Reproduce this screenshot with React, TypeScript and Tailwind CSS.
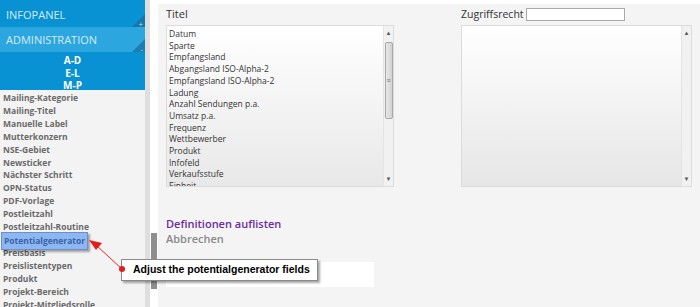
import React from 'react';

const sideItems = [
  'Mailing-Kategorie',
  'Mailing-Titel',
  'Manuelle Label',
  'Mutterkonzern',
  'NSE-Gebiet',
  'Newsticker',
  'Nächster Schritt',
  'OPN-Status',
  'PDF-Vorlage',
  'Postleitzahl',
  'Postleitzahl-Routine',
  'Potentialgenerator',
  'Preisbasis',
  'Preislistentypen',
  'Produkt',
  'Projekt-Bereich',
  'Projekt-Mitgliedsrolle',
];

const titelItems = [
  'Datum',
  'Sparte',
  'Empfangsland',
  'Abgangsland ISO-Alpha-2',
  'Empfangsland ISO-Alpha-2',
  'Ladung',
  'Anzahl Sendungen p.a.',
  'Umsatz p.a.',
  'Frequenz',
  'Wettbewerber',
  'Produkt',
  'Infofeld',
  'Verkaufsstufe',
  'Einheit',
];

const Corner: React.FC<{ sign: string }> = ({ sign }) => (
  <div className="absolute right-0 bottom-0 w-[13px] h-[13px]">
    <svg width="13" height="13" viewBox="0 0 13 13">
      <polygon points="13,0 13,13 0,13" fill="#1a6f9e" fillOpacity="0.75" />
    </svg>
    <span className="absolute right-[2px] bottom-[-1px] text-[8px] leading-none text-[#b9dcf0]">{sign}</span>
  </div>
);

const Scrollbar: React.FC<{ thumb?: boolean }> = ({ thumb }) => (
  <div className="w-[10px] flex flex-col items-center bg-[#f1f1f1] border-l border-[#e4e4e4]">
    <span className="text-[6px] leading-none mt-[4px] text-[#555]">▲</span>
    {thumb ? (
      <div className="mt-[6px] w-[8px] h-[77px] rounded-[2px] border border-[#a8a8a8] bg-gradient-to-r from-[#e8e8e8] to-[#d2d2d2] flex items-center justify-center">
        <span className="text-[7px] leading-none text-[#777]">≡</span>
      </div>
    ) : null}
    <div className="flex-1" />
    <span className="text-[6px] leading-none mb-[4px] text-[#555]">▼</span>
  </div>
);

const App: React.FC = () => {
  return (
    <div className="relative w-[700px] h-[307px] overflow-hidden bg-white flex font-['Open_Sans',sans-serif]">
      {/* Sidebar */}
      <div className="w-[145px] flex flex-col bg-[#f3f3f3]">
        <div className="bg-[#0891d3]">
          <div className="relative h-[27px] flex items-center pl-[6px] pt-[3px] text-[11px] text-[#d6ecf8]">
            INFOPANEL
            <Corner sign="+" />
          </div>
          <div className="relative h-[25px] flex items-center pl-[6px] pt-[1px] bg-[#2ba6de] text-[11px] text-[#d6ecf8]">
            ADMINISTRATION
            <Corner sign="-" />
          </div>
          <div className="h-[38px] flex flex-col items-center pt-[2px] text-[10px] font-bold text-white leading-[12.6px]">
            <span>A-D</span>
            <span>E-L</span>
            <span>M-P</span>
          </div>
        </div>
        <div className="flex flex-col pl-[3px] pt-[2px] text-[8.5px] font-bold text-[#6a6a6a] leading-[12.9px]">
          {sideItems.map((item) => (
            <span key={item} className="whitespace-nowrap">{item}</span>
          ))}
        </div>
      </div>

      {/* Separator with page scrollbar */}
      <div className="w-[5px] bg-[#dedede]" />
      <div className="w-[8px] bg-white flex flex-col">
        <div className="h-[233px]" />
        <div className="ml-[1px] w-[6px] h-[56px] bg-[#8e8e8e]" />
      </div>

      {/* Main */}
      <div className="flex-1 flex flex-col">
        <div className="h-[4px] bg-white" />
        <div className="flex-1 bg-[#f4f4f4] pl-[8px] text-[#333]">
          <div className="flex">
            <div className="w-[228px] flex flex-col">
              <div className="h-[21px] flex items-center text-[11px]">Titel</div>
              <div className="h-[162px] flex border border-[#dcdcdc] bg-gradient-to-b from-white to-[#e8e8e8]">
                <div className="flex-1 overflow-hidden pl-[2px] pt-[2px] text-[8.5px] leading-[11.7px] text-[#333]">
                  {titelItems.map((t, i) => (
                    <div key={i} className="whitespace-nowrap">{t}</div>
                  ))}
                </div>
                <Scrollbar thumb />
              </div>
            </div>
            <div className="w-[67px]" />
            <div className="w-[231px] flex flex-col">
              <div className="h-[21px] flex items-center text-[10.5px]">
                Zugriffsrecht
                <div className="ml-[2px] w-[99px] h-[13px] bg-white border border-[#aaa]" />
              </div>
              <div className="h-[162px] flex border border-[#dcdcdc] bg-gradient-to-b from-white to-[#e6e6e6]">
                <div className="flex-1" />
                <Scrollbar />
              </div>
            </div>
          </div>
          <div className="mt-[29px] text-[11px] font-semibold text-[#6b2da0] leading-[15px]">Definitionen auflisten</div>
          <div className="text-[11px] font-semibold text-[#8a8a8a] leading-[15px]">Abbrechen</div>
          <div className="mt-[16px] w-[208px] h-[25px] bg-white" />
        </div>
      </div>

      {/* Highlighted item */}
      <div className="absolute left-[1px] top-[232px] w-[87px] h-[18px] bg-[#8db7f2] border border-[#6d8fc4] shadow-[2px_2px_2px_rgba(0,0,0,0.35)] flex items-center pl-[2px] text-[8.5px] font-bold text-[#3a63a8] whitespace-nowrap font-['Open_Sans',sans-serif]">
        Potentialgenerator
      </div>

      {/* Callout arrow */}
      <svg className="absolute left-0 top-0" width="700" height="307" viewBox="0 0 700 307">
        <line x1="122" y1="269" x2="97" y2="246" stroke="#e22" strokeWidth="1" />
        <polygon points="89,240 102,243 96,250" fill="#e51c1c" />
      </svg>

      {/* Tooltip */}
      <div className="absolute left-[121px] top-[259px] w-[197px] h-[22px] bg-white border border-[#8a8a8a] shadow-[2px_2px_2px_rgba(0,0,0,0.35)] flex items-center pl-[11px] text-[10.5px] font-bold text-black whitespace-nowrap font-['Liberation_Sans',Arial,sans-serif]">
        Adjust the potentialgenerator fields
      </div>
      <div className="absolute left-[119px] top-[266px] w-[6px] h-[6px] rounded-full bg-[#e51c1c]" />
    </div>
  );
};

export default App;
